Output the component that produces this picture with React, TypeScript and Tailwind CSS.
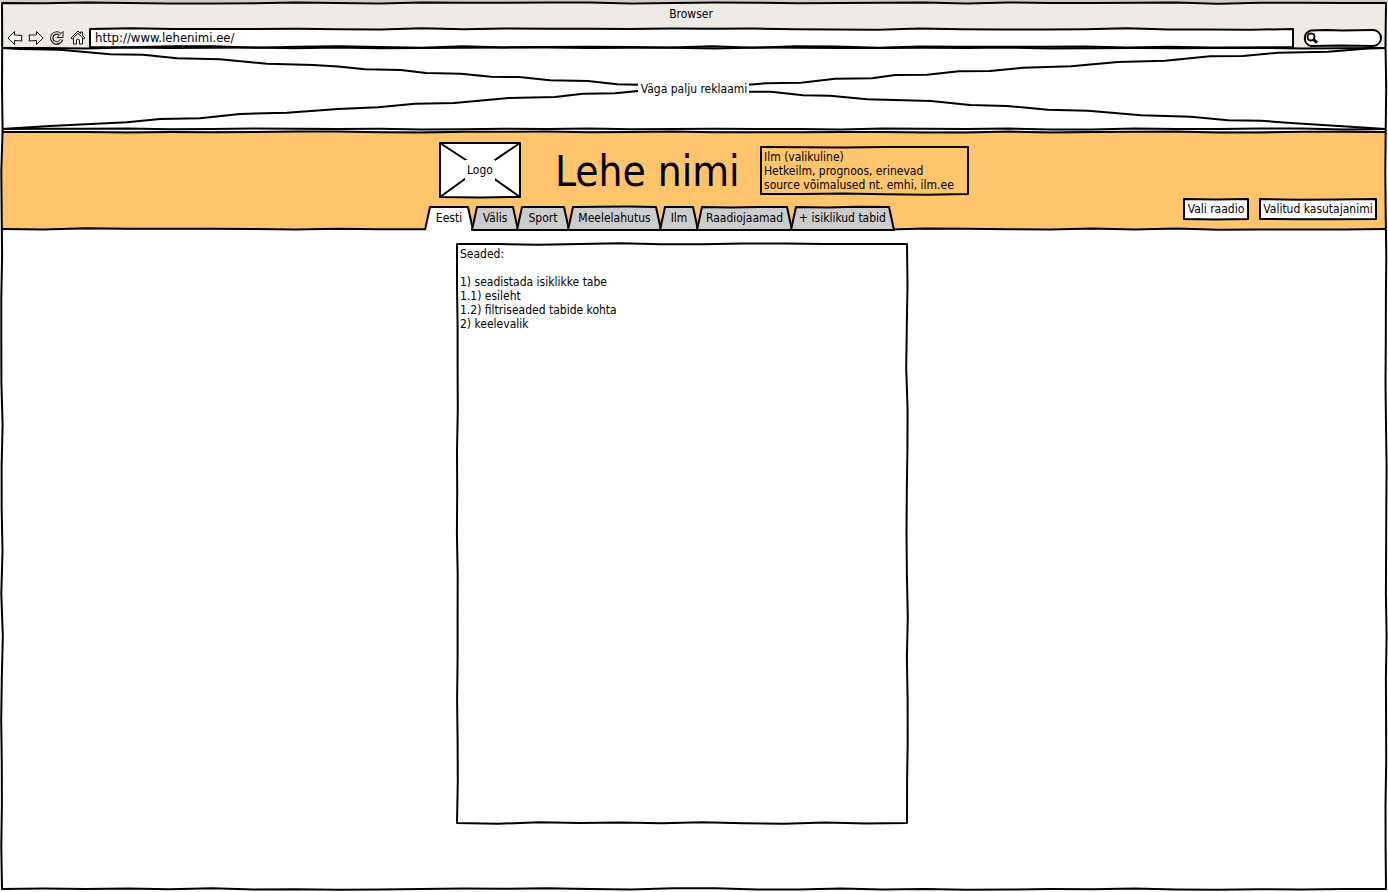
import React from "react";

type Point = [number, number];

function jitter(seed: number) {
  const v = Math.sin(seed * 12.9898 + 4.137) * 43758.5453;
  return (v - Math.floor(v)) * 2 - 1;
}

function wobble(points: Point[], seed: number, amp = 1, step = 42) {
  let d = `M${points[0][0]} ${points[0][1]}`;
  let k = seed * 100;
  for (let i = 1; i < points.length; i++) {
    const [x1, y1] = points[i - 1];
    const [x2, y2] = points[i];
    const len = Math.hypot(x2 - x1, y2 - y1);
    const n = Math.max(1, Math.round(len / step));
    const nx = -(y2 - y1) / len;
    const ny = (x2 - x1) / len;
    for (let j = 1; j <= n; j++) {
      const t = j / n;
      const off = j === n ? 0 : jitter(k++) * amp;
      d += ` L${(x1 + (x2 - x1) * t + nx * off).toFixed(1)} ${(y1 + (y2 - y1) * t + ny * off).toFixed(1)}`;
    }
  }
  return d;
}

type SketchProps = { w: number; h: number; d: string; fill?: string };

function Sketch({ w, h, d, fill = "none" }: SketchProps) {
  return (
    <svg
      aria-hidden="true"
      className="pointer-events-none absolute inset-0 h-full w-full overflow-visible"
      viewBox={`0 0 ${w} ${h}`}
      preserveAspectRatio="none"
    >
      <path d={d} fill={fill} stroke="#000" strokeWidth="2" strokeLinejoin="round" vectorEffect="non-scaling-stroke" />
    </svg>
  );
}

function Frame({ w, h, seed, fill }: { w: number; h: number; seed: number; fill?: string }) {
  const d = wobble([[1, 1], [w - 1, 1], [w - 1, h - 1], [1, h - 1], [1, 1]], seed, 0.8);
  return <Sketch w={w} h={h} d={d + " Z"} fill={fill} />;
}

const toolbarIcons = [
  {
    label: "Back",
    art: <path d="M1 8 L7.5 1.5 V5 L15 5.5 L14.5 8 L15 11 L7.5 10.5 V14.5 Z" />,
  },
  {
    label: "Forward",
    art: <path d="M15 8 L8.5 1.5 V5 L1 5 L1.5 8 L1 11 L8.5 10.5 V14.5 Z" />,
  },
  {
    label: "Reload",
    art: (
      <>
        <path d="M11 4.2 A5 5 0 1 0 12.6 9.5" fill="none" strokeWidth="3.4" />
        <path d="M14 1.5 V7.5 H8 Z" />
        <path d="M11 4.2 A5 5 0 1 0 12.4 9.5" fill="none" stroke="#fff" strokeWidth="1.2" />
      </>
    ),
  },
  {
    label: "Home",
    art: (
      <>
        <path d="M3.5 7.5 V14 H6.5 V9.8 Q8 8.2 9.5 9.8 V14 H12.5 V7.5 L8 3 Z" />
        <path d="M1 8 L8 1 L10.5 3.5 V2 H12.5 V5.5 L15 8 L13.6 8.8 L8 3.4 L2.4 8.8 Z" />
      </>
    ),
  },
];

const tabs = [
  { label: "Eesti", width: 48, size: "w-12" },
  { label: "Välis", width: 46, size: "w-[46px]" },
  { label: "Sport", width: 52, size: "w-[52px]" },
  { label: "Meelelahutus", width: 93, size: "w-[93px]" },
  { label: "Ilm", width: 38, size: "w-[38px]" },
  { label: "Raadiojaamad", width: 95, size: "w-[95px]" },
  { label: "+ isiklikud tabid", width: 103, size: "w-[103px]" },
];

function BrowserBar() {
  return (
    <div className="relative bg-[#eeeae5] pt-0.5">
      <div className="flex h-5 items-center justify-center pr-1.5">Browser</div>
      <div className="flex h-6 items-center pl-[5px] pr-1 pt-[3px]">
        <div className="flex gap-[5px]">
          {toolbarIcons.map((icon) => (
            <button key={icon.label} type="button" aria-label={icon.label} className="block size-4">
              <svg className="size-4" viewBox="0 0 16 16" fill="#fff" stroke="#111" strokeWidth="1" strokeLinejoin="round">
                {icon.art}
              </svg>
            </button>
          ))}
        </div>
        <div className="relative ml-[3px] h-5 flex-1 bg-white">
          <Frame w={1205} h={20} seed={3} />
          <input aria-label="Address" defaultValue="http://www.lehenimi.ee/" className="relative block h-5 w-full bg-transparent pl-[6px] text-[13px] outline-none" />
        </div>
        <div className="relative ml-2 h-[18px] w-20">
          <Sketch w={80} h={18} fill="#fff" d="M9 1.4 L24 1 L40 1.6 L71 1 A8 8 0 0 1 71 17 L40 16.5 L9 17 A8 8 0 0 1 9 1.4 Z" />
          <svg aria-hidden="true" className="absolute left-1 top-[3px] size-3" viewBox="0 0 12 12" fill="none" stroke="#000" strokeWidth="1.8">
            <path d="M5 1.4 L7.8 2.2 L8.6 5 L7.6 7.6 L5 8.6 L2.2 7.6 L1.4 5 L2.4 2.2 Z" strokeLinejoin="round" />
            <path d="M7 7 L11 10.6" strokeWidth="3" />
          </svg>
          <input type="search" aria-label="Search" className="relative block h-[18px] w-full bg-transparent pl-5 pr-2 outline-none" />
        </div>
      </div>
    </div>
  );
}

function Advert() {
  return (
    <section className="relative flex h-[83px] items-center justify-center">
      <Sketch w={1384} h={83} d={wobble([[0, 0], [1384, 0]], 5, 0.6)} />
      <Sketch w={1384} h={83} d={wobble([[1384, 81], [0, 81]], 6, 0.6)} />
      <Sketch w={1384} h={83} d="M0 0 L18 1 L58 1.7 L108 6.3 L141 6.7 L175 10.3 L218 11.3 L265 15.7 L311 17 L336 18.5 L363 21.3 L399 22 L424 25 L459 25.7 L489 28.7 L517 29 L548 32.3 L586 33 L615 36.3 L636 36.7" />
      <Sketch w={1384} h={83} d="M0 81 L48 78 L125 74.3 L158 71 L198 70.3 L238 66 L285 64.7 L336 61 L376 59.3 L413 55.7 L452 55 L507 50 L553 49 L581 45.7 L613 45.3 L636 43" />
      <Sketch w={1384} h={83} d="M746 36.7 L764 35.3 L799 34.7 L833 30.7 L870 30.3 L893 27 L925 26.7 L957 23.3 L988 23 L1021 19.7 L1069 18.3 L1116 14 L1163 12.7 L1208 8.3 L1241 8 L1276 4.7 L1326 3.7 L1366 0.5 L1384 0" />
      <Sketch w={1384} h={83} d="M746 43.7 L769 43.7 L801 47.3 L828 47.7 L865 51.3 L929 53 L968 57 L1005 58 L1046 61.8 L1086 62.7 L1139 67.3 L1189 68.7 L1226 72.3 L1259 72.7 L1289 75 L1384 81" />
      <span className="relative bg-white px-0.5 pb-px">Väga palju reklaami</span>
    </section>
  );
}

function Masthead() {
  return (
    <header className="relative bg-[#ffc46c] pt-[11px]">
      <Sketch w={1384} h={99} d={wobble([[0, 1], [1384, 1]], 8, 0.6)} />
      <Sketch w={1384} h={99} d={wobble([[0, 98], [1384, 98]], 9, 0.8)} />
      <div className="flex h-14 items-start justify-center pl-5">
        <div className="relative flex h-14 w-[82px] items-center justify-center">
          <Frame w={82} h={56} seed={11} fill="#fff" />
          <Sketch w={82} h={56} d="M1 1 L30 20 L50 33 L81 55 M81 1 L50 22 L30 34 L1 55" />
          <span className="relative bg-white px-0.5 py-[3px]">Logo</span>
        </div>
        <h1 className="ml-[34px] w-[184px] whitespace-nowrap text-[42px] leading-[60px]">Lehe nimi</h1>
        <div className="relative ml-[21px] mt-1 h-[49px] w-[209px] pl-1 pt-1">
          <Frame w={209} h={49} seed={13} />
          <p>Ilm (valikuline)<br />Hetkeilm, prognoos, erinevad<br />source võimalused nt. emhi, ilm.ee</p>
        </div>
      </div>
      <div className="flex h-8 items-start pl-[calc(50%-269px)] pr-[9px]">
        <nav aria-label="Sections" className="flex self-end">
          {tabs.map((tab, i) => (
            <a
              key={tab.label}
              href="#"
              aria-current={i === 0 ? "page" : undefined}
              className={`relative -mr-px flex h-6 items-center justify-center whitespace-nowrap ${tab.size}`}
            >
              <Sketch
                w={tab.width}
                h={24}
                fill={i === 0 ? "#fff" : "#ccc"}
                d={wobble([[0, 24], [5, 1], [tab.width - 5, 1], [tab.width, 24]], 20 + i, 0.6, 30) + (i === 0 ? "" : " Z")}
              />
              {i === 0 && <span className="absolute inset-x-0.5 -bottom-0.5 h-[3px] bg-white" />}
              <span className="relative">{tab.label}</span>
            </a>
          ))}
        </nav>
        <div className="ml-auto flex gap-[10px]">
          <button type="button" className="relative h-[22px] w-[66px] whitespace-nowrap">
            <Frame w={66} h={22} seed={31} fill="#fff" />
            <span className="relative">Vali raadio</span>
          </button>
          <button type="button" className="relative h-[22px] w-[118px] whitespace-nowrap">
            <Frame w={118} h={22} seed={33} fill="#fff" />
            <span className="relative">Valitud kasutajanimi</span>
          </button>
        </div>
      </div>
    </header>
  );
}

export default function App() {
  return (
    <div className="flex min-h-screen flex-col border-t-2 border-[#d0cdc8] bg-white px-0.5 pb-0.5 font-['DejaVu_Sans_Condensed','DejaVu_Sans',sans-serif] text-[12px] leading-[14px] text-black">
      <div className="relative flex flex-1 flex-col">
        <BrowserBar />
        <Advert />
        <Masthead />
        <main className="flex flex-1 justify-center pb-16 pr-6 pt-[13px]">
          <section className="relative h-[581px] w-[452px] p-1">
            <Frame w={452} h={581} seed={41} />
            <h2 className="mb-[14px]">Seaded:</h2>
            <p>1) seadistada isiklikke tabe<br />1.1) esileht<br />1.2) filtriseaded tabide kohta<br />2) keelevalik</p>
          </section>
        </main>
        <Sketch w={1384} h={888} d={wobble([[0, 1], [1384, 1], [1384, 887], [0, 887], [0, 1]], 50, 0.8) + " Z"} />
      </div>
    </div>
  );
}
